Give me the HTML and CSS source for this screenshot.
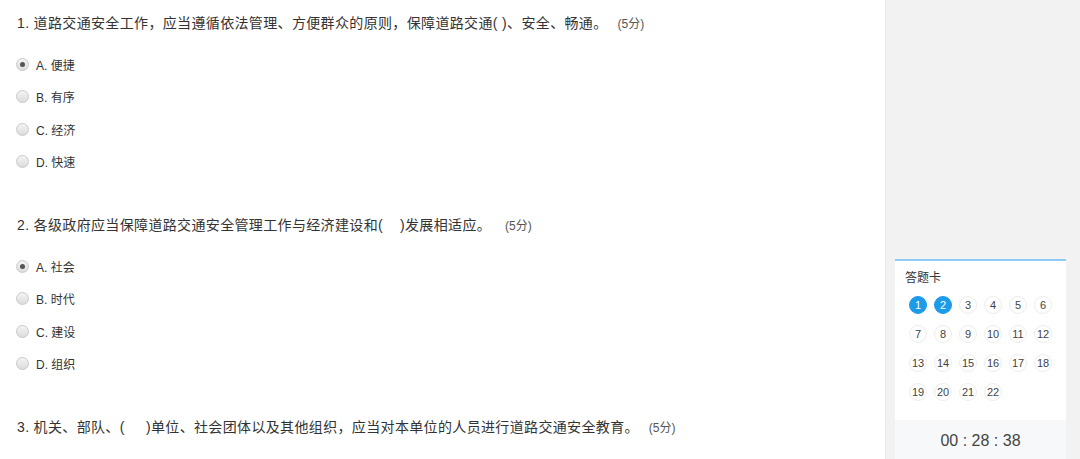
FILE: index.html
```html
<!DOCTYPE html>
<html lang="zh-CN">
<head>
    <meta charset="UTF-8">
    <meta name="viewport" content="width=device-width, initial-scale=1.0">
    <title>在线考试</title>
    <link rel="stylesheet" href="styles.css">
</head>
<body>
    <div class="page">
        <div class="main">
            <!-- 第1题 -->
            <div class="question">
                <div class="q-title">1. 道路交通安全工作，应当遵循依法管理、方便群众的原则，保障道路交通( )、安全、畅通。<span class="score">(5分)</span></div>
                <ul class="options">
                    <li><span class="radio checked"></span>A. 便捷</li>
                    <li><span class="radio"></span>B. 有序</li>
                    <li><span class="radio"></span>C. 经济</li>
                    <li><span class="radio"></span>D. 快速</li>
                </ul>
            </div>

            <!-- 第2题 -->
            <div class="question">
                <div class="q-title">2. 各级政府应当保障道路交通安全管理工作与经济建设和(&nbsp;&nbsp;&nbsp;&nbsp;)发展相适应。<span class="score wide">(5分)</span></div>
                <ul class="options">
                    <li><span class="radio checked"></span>A. 社会</li>
                    <li><span class="radio"></span>B. 时代</li>
                    <li><span class="radio"></span>C. 建设</li>
                    <li><span class="radio"></span>D. 组织</li>
                </ul>
            </div>

            <!-- 第3题 -->
            <div class="question">
                <div class="q-title">3. 机关、部队、(&nbsp;&nbsp;&nbsp;&nbsp;&nbsp;)单位、社会团体以及其他组织，应当对本单位的人员进行道路交通安全教育。<span class="score">(5分)</span></div>
            </div>
        </div>

        <div class="side">
            <div class="card">
                <div class="card-title">答题卡</div>
                <div class="nums">
                    <span class="num done">1</span>
                    <span class="num done">2</span>
                    <span class="num">3</span>
                    <span class="num">4</span>
                    <span class="num">5</span>
                    <span class="num">6</span>
                    <span class="num">7</span>
                    <span class="num">8</span>
                    <span class="num">9</span>
                    <span class="num">10</span>
                    <span class="num">11</span>
                    <span class="num">12</span>
                    <span class="num">13</span>
                    <span class="num">14</span>
                    <span class="num">15</span>
                    <span class="num">16</span>
                    <span class="num">17</span>
                    <span class="num">18</span>
                    <span class="num">19</span>
                    <span class="num">20</span>
                    <span class="num">21</span>
                    <span class="num">22</span>
                </div>
                <div class="timer">00 : 28 : 38</div>
            </div>
        </div>
    </div>
</body>
</html>
```

FILE: styles.css
```css
body {
    margin: 0;
    padding: 0;
    font-family: "Liberation Sans", "Noto Sans CJK SC", sans-serif;
    color: #333;
    background-color: #fff;
}

.page {
    display: flex;
    height: 459px;
    overflow: hidden;
}

.main {
    flex: 1;
    padding: 13px 0 0 16px;
}

.question {
    margin-bottom: 37px;
}

.q-title {
    font-size: 14px;
    line-height: 20px;
    letter-spacing: 0.35px;
    padding-left: 1px;
}

.score {
    font-size: 12px;
    color: #555;
    letter-spacing: 0;
    margin-left: 10px;
}

.score.wide {
    margin-left: 14px;
}

.options {
    list-style: none;
    margin: 14px 0 0 0;
    padding: 0;
}

.options li {
    display: flex;
    align-items: center;
    height: 32.5px;
    font-size: 12px;
    color: #333;
}

.radio {
    width: 11px;
    height: 11px;
    border: 1px solid #c9c9c9;
    border-radius: 50%;
    background: linear-gradient(#f4f4f4, #dcdcdc);
    margin: 0 7px 0 0;
    position: relative;
}

.radio.checked::after {
    content: "";
    position: absolute;
    left: 3px;
    top: 3px;
    width: 5px;
    height: 5px;
    border-radius: 50%;
    background-color: #555;
}

.side {
    width: 195px;
    background-color: #f2f2f2;
    border-left: 1px solid #ebebeb;
    padding: 259px 0 0 9px;
    box-sizing: border-box;
}

.card {
    width: 171px;
    background-color: #fff;
    border-top: 2px solid #8fcaf2;
}

.card-title {
    font-size: 12px;
    line-height: 16px;
    padding: 9px 0 0 10px;
}

.nums {
    display: grid;
    grid-template-columns: repeat(6, 18px);
    column-gap: 7px;
    row-gap: 11px;
    padding: 10px 0 19px 14px;
}

.num {
    width: 18px;
    height: 18px;
    box-sizing: border-box;
    border: 1px solid #ededed;
    border-radius: 50%;
    font-size: 11px;
    line-height: 16px;
    text-align: center;
    color: #444;
}

.num.done {
    background-color: #1e9be8;
    border-color: #1e9be8;
    color: #fff;
}

.timer {
    background-color: #f7f8fa;
    height: 44px;
    line-height: 42px;
    text-align: center;
    font-size: 16px;
    color: #444;
}
```
